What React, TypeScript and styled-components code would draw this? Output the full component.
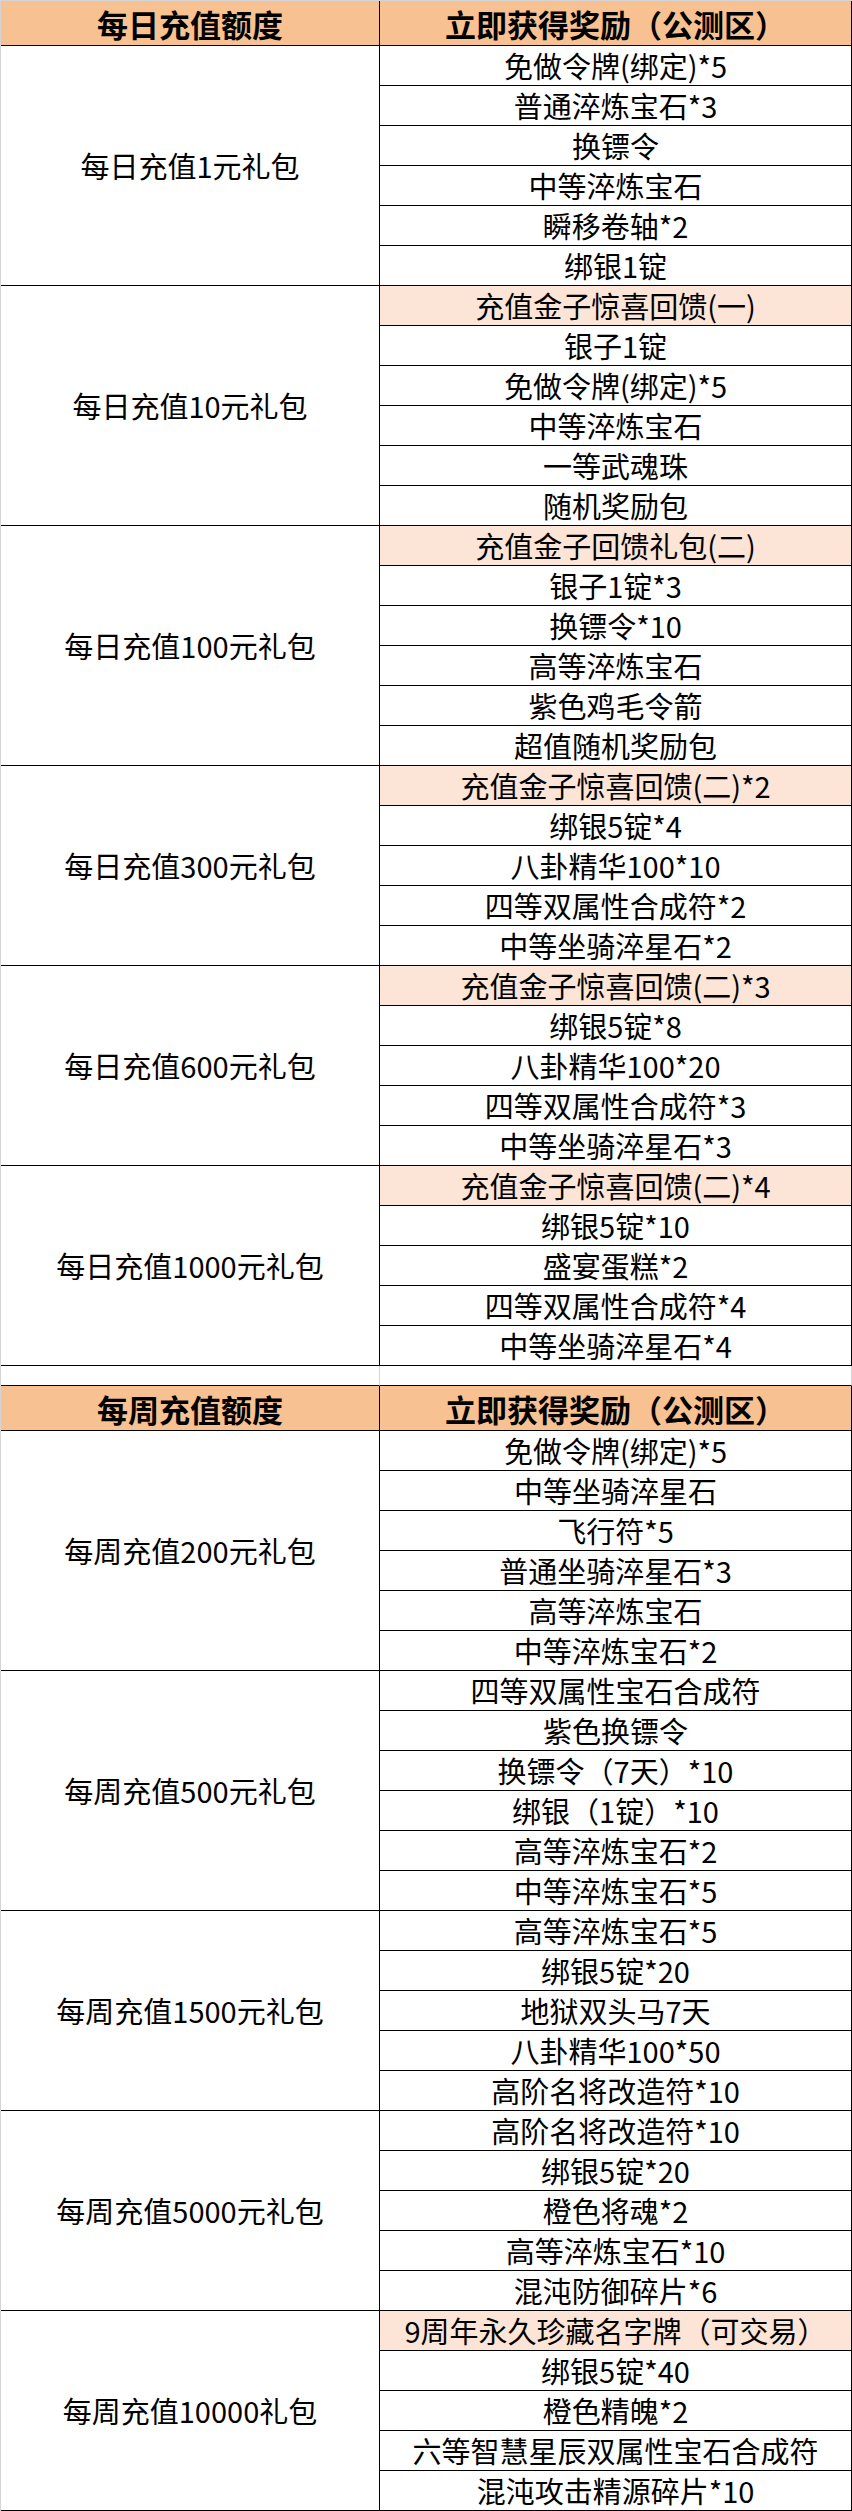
import * as React from "react"
import styled, { createGlobalStyle } from 'styled-components';

const GlobalStyle = createGlobalStyle`
    html, body {
        margin: 0;
        padding: 0;
        background: #ffffff;
    }
    body {
        font-family: "Noto Sans CJK SC", "Noto Sans", sans-serif;
        color: #000000;
    }
`;

const ORANGE = '#F8C191';
const PEACH = '#FCE4D6';
const GRID = '#d4d4d4';

const Sheet = styled.div`
    width: 852px;
    box-sizing: border-box;
    border-top: 1px solid ${GRID};
    border-left: 1px solid ${GRID};
`;

const Row = styled.div`
    display: flex;
    flex-direction: row;
`;

const HeadCell = styled.div<{ $wide?: boolean }>`
    box-sizing: border-box;
    width: ${p => p.$wide ? 472 : 379}px;
    height: 45px;
    background: ${ORANGE};
    border-right: 1px solid #000;
    border-bottom: 1px solid #000;
    display: flex;
    align-items: center;
    justify-content: center;
    font-size: 31px;
    font-weight: 700;
    line-height: 1;
`;

const Label = styled.div`
    box-sizing: border-box;
    width: 379px;
    border-right: 1px solid #000;
    border-bottom: 1px solid #000;
    display: flex;
    align-items: center;
    justify-content: center;
    font-size: 29px;
    line-height: 1;
    white-space: nowrap;
`;

const Items = styled.div`
    width: 472px;
    display: flex;
    flex-direction: column;
`;

const Item = styled.div<{ $hl?: boolean }>`
    box-sizing: border-box;
    height: 40px;
    background: ${p => p.$hl ? PEACH : 'transparent'};
    border-right: 1px solid #000;
    border-bottom: 1px solid #000;
    display: flex;
    align-items: center;
    justify-content: center;
    font-size: 29px;
    line-height: 1;
    white-space: nowrap;
`;

const GapCell = styled.div<{ $wide?: boolean }>`
    box-sizing: border-box;
    width: ${p => p.$wide ? 472 : 379}px;
    height: 20px;
    border-right: 1px solid ${GRID};
    border-bottom: 1px solid #000;
`;

type Group = { label: string; items: string[]; hl?: boolean };

const daily: Group[] = [
    { label: '每日充值1元礼包', items: ['免做令牌(绑定)*5', '普通淬炼宝石*3', '换镖令', '中等淬炼宝石', '瞬移卷轴*2', '绑银1锭'] },
    { label: '每日充值10元礼包', hl: true, items: ['充值金子惊喜回馈(一)', '银子1锭', '免做令牌(绑定)*5', '中等淬炼宝石', '一等武魂珠', '随机奖励包'] },
    { label: '每日充值100元礼包', hl: true, items: ['充值金子回馈礼包(二)', '银子1锭*3', '换镖令*10', '高等淬炼宝石', '紫色鸡毛令箭', '超值随机奖励包'] },
    { label: '每日充值300元礼包', hl: true, items: ['充值金子惊喜回馈(二)*2', '绑银5锭*4', '八卦精华100*10', '四等双属性合成符*2', '中等坐骑淬星石*2'] },
    { label: '每日充值600元礼包', hl: true, items: ['充值金子惊喜回馈(二)*3', '绑银5锭*8', '八卦精华100*20', '四等双属性合成符*3', '中等坐骑淬星石*3'] },
    { label: '每日充值1000元礼包', hl: true, items: ['充值金子惊喜回馈(二)*4', '绑银5锭*10', '盛宴蛋糕*2', '四等双属性合成符*4', '中等坐骑淬星石*4'] },
];

const weekly: Group[] = [
    { label: '每周充值200元礼包', items: ['免做令牌(绑定)*5', '中等坐骑淬星石', '飞行符*5', '普通坐骑淬星石*3', '高等淬炼宝石', '中等淬炼宝石*2'] },
    { label: '每周充值500元礼包', items: ['四等双属性宝石合成符', '紫色换镖令', '换镖令（7天）*10', '绑银（1锭）*10', '高等淬炼宝石*2', '中等淬炼宝石*5'] },
    { label: '每周充值1500元礼包', items: ['高等淬炼宝石*5', '绑银5锭*20', '地狱双头马7天', '八卦精华100*50', '高阶名将改造符*10'] },
    { label: '每周充值5000元礼包', items: ['高阶名将改造符*10', '绑银5锭*20', '橙色将魂*2', '高等淬炼宝石*10', '混沌防御碎片*6'] },
    { label: '每周充值10000礼包', hl: true, items: ['9周年永久珍藏名字牌（可交易）', '绑银5锭*40', '橙色精魄*2', '六等智慧星辰双属性宝石合成符', '混沌攻击精源碎片*10'] },
];

const Section: React.FC<{ title: string; groups: Group[] }> = ({ title, groups }) => {
    return <>
        <Row>
            <HeadCell>{title}</HeadCell>
            <HeadCell $wide>立即获得奖励（公测区）</HeadCell>
        </Row>
        {groups.map(g => (
            <Row key={g.label}>
                <Label>{g.label}</Label>
                <Items>
                    {g.items.map((t, i) => <Item key={i} $hl={g.hl && i === 0}>{t}</Item>)}
                </Items>
            </Row>
        ))}
    </>
}

export default function App() {
    return <>
        <GlobalStyle />
        <Sheet>
            <Section title="每日充值额度" groups={daily} />
            <Row>
                <GapCell />
                <GapCell $wide />
            </Row>
            <Section title="每周充值额度" groups={weekly} />
        </Sheet>
    </>
}
